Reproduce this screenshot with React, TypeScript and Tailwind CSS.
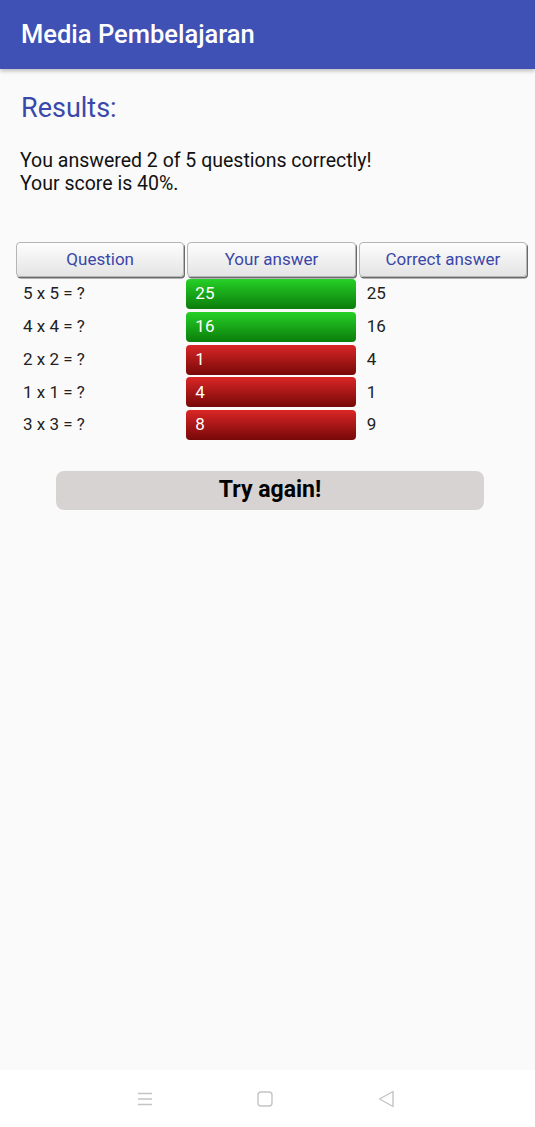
import React from "react";

const rows = [
  { q: "5 x 5 = ?", a: "25", c: "25", ok: true },
  { q: "4 x 4 = ?", a: "16", c: "16", ok: true },
  { q: "2 x 2 = ?", a: "1", c: "4", ok: false },
  { q: "1 x 1 = ?", a: "4", c: "1", ok: false },
  { q: "3 x 3 = ?", a: "8", c: "9", ok: false },
];

function HeadCell({ children }: { children: React.ReactNode }) {
  return (
    <div className="h-[35px] flex items-center justify-center rounded-[4px] border border-[#b5b5b5] bg-gradient-to-b from-[#fdfdfd] to-[#e4e4e4] shadow-[1px_1.5px_0_#6a6a6a] text-[17px] text-[#3a47a8]">
      {children}
    </div>
  );
}

export default function App() {
  return (
    <div
      className="h-[1127px] w-[535px] flex flex-col bg-[#fafafa] overflow-hidden"
      style={{ fontFamily: "Roboto, 'Noto Sans', sans-serif" }}
    >
      <div className="h-[69px] shrink-0 bg-[#3f51b5] flex items-center px-[21px] shadow-[0_2px_4px_rgba(0,0,0,0.25)] relative z-10">
        <span className="text-white text-[25.5px] font-medium pb-[1px]">Media Pembelajaran</span>
      </div>
      <div className="flex-1 flex flex-col">
        <div className="px-[21px] pt-[22px]">
          <div className="text-[27px] leading-[34px] text-[#3949ab]">Results:</div>
          <div className="mt-[24px] text-[19.5px] leading-[23px] text-[#111] ml-[-1px]">
            <div>You answered 2 of 5 questions correctly!</div>
            <div>Your score is 40%.</div>
          </div>
        </div>
        <div className="mx-[16px] mt-[47px] w-[511px]">
          <div className="grid grid-cols-3 gap-[3px]">
            <HeadCell>Question</HeadCell>
            <HeadCell>Your answer</HeadCell>
            <HeadCell>Correct answer</HeadCell>
          </div>
          <div className="mt-[2px] flex flex-col gap-[2.75px]">
            {rows.map((r) => (
              <div key={r.q} className="grid grid-cols-3 gap-[3px] h-[30px] items-center text-[17px]">
                <div className="pl-[7px] text-[#222]">{r.q}</div>
                <div
                  className={
                    "h-[30px] ml-[-1px] flex items-center pl-[9px] rounded-[4px] text-white " +
                    (r.ok
                      ? "bg-gradient-to-b from-[#26d126] to-[#0b7d0b]"
                      : "bg-gradient-to-b from-[#dc2626] to-[#770808]")
                  }
                >
                  {r.a}
                </div>
                <div className="pl-[8px] text-[#222]">{r.c}</div>
              </div>
            ))}
          </div>
        </div>
        <div className="mt-[31px] flex justify-center pl-[5px]">
          <button className="w-[428px] h-[39px] rounded-[8px] bg-[#d7d3d3] text-[23px] font-bold text-black">
            Try again!
          </button>
        </div>
      </div>
      <div className="h-[57px] shrink-0 bg-white flex items-start justify-between">
        <div className="w-full flex items-center pt-[20px]">
          <div className="ml-[137px]">
            <svg width="16" height="16" viewBox="0 0 16 16" fill="none" stroke="#c4c4c4" strokeWidth="1.3">
              <path d="M1 2.5h14M1 8h14M1 13.5h14" />
            </svg>
          </div>
          <div className="ml-[104px]">
            <svg width="17" height="17" viewBox="0 0 17 17" fill="none" stroke="#c4c4c4" strokeWidth="1.4">
              <rect x="1" y="1" width="14" height="14" rx="3" />
            </svg>
          </div>
          <div className="ml-[104px]">
            <svg width="17" height="18" viewBox="0 0 17 18" fill="none" stroke="#c4c4c4" strokeWidth="1.4" strokeLinejoin="round">
              <path d="M15 1.5 L1.5 9 L15 16.5 Z" />
            </svg>
          </div>
        </div>
      </div>
    </div>
  );
}
